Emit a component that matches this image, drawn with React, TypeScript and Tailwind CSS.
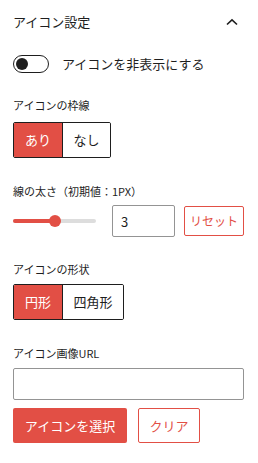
import { useState } from 'react';

const RED = 'bg-[#e24f45]';

const Segmented = ({ options, active, widths }: { options: string[]; active: number; widths: string[] }) => (
  <div className="flex h-[36px] border border-[#1e1e1e] rounded-[2px] overflow-hidden w-fit">
    {options.map((opt, i) => (
      <div
        key={opt}
        className={`${widths[i]} flex items-center justify-center text-[13px] ${i > 0 ? 'border-l border-[#1e1e1e]' : ''} ${
          i === active ? `${RED} text-white` : 'bg-white text-[#1e1e1e]'
        }`}
      >
        {opt}
      </div>
    ))}
  </div>
);

const Label = ({ children, className = '' }: { children: React.ReactNode; className?: string }) => (
  <div className={`text-[11px] leading-[16px] text-[#1e1e1e] uppercase ${className}`}>{children}</div>
);

export default function App() {
  const [width, setWidth] = useState('3');

  return (
    <div
      className="w-[258px] h-[463px] bg-white text-[#1e1e1e] overflow-hidden"
      style={{ fontFamily: '"Noto Sans CJK JP", "Noto Sans", sans-serif' }}
    >
      <div className="flex items-center justify-between h-[44px] pl-[13px] pr-[20px]">
        <span className="text-[13px]">アイコン設定</span>
        <svg width="12" height="8" viewBox="0 0 12 8" fill="none">
          <path d="M1 6.5 L6 1.8 L11 6.5" stroke="#1e1e1e" strokeWidth="1.6" />
        </svg>
      </div>

      <div className="px-[13px]">
        <div className="flex items-center mt-[11px] h-[18px]">
          <div className="w-[36px] h-[18px] rounded-full border border-[#1e1e1e] flex items-center px-[2px]">
            <div className="w-[12px] h-[12px] rounded-full bg-[#1e1e1e]" />
          </div>
          <span className="ml-[13px] text-[13px]">アイコンを非表示にする</span>
        </div>

        <Label className="mt-[24px]">アイコンの枠線</Label>
        <div className="mt-[9px]">
          <Segmented options={['あり', 'なし']} active={0} widths={['w-[48px]', 'w-[48px]']} />
        </div>

        <Label className="mt-[25px]">線の太さ（初期値：1px）</Label>
        <div className="flex items-center mt-[6px] h-[32px]">
          <div className="relative w-[83px] h-[4px] rounded-full bg-[#dddddd]">
            <div className={`absolute left-0 top-0 h-[4px] w-[42px] rounded-full ${RED}`} />
            <div className={`absolute left-[36px] top-[-4px] w-[12px] h-[12px] rounded-full ${RED}`} />
          </div>
          <input
            value={width}
            onChange={(e) => setWidth(e.target.value)}
            className="ml-[16px] w-[63px] h-[32px] border border-[#949494] rounded-[2px] px-[8px] text-[13px] outline-none"
          />
          <button className="ml-[9px] w-[60px] h-[30px] border border-[#e24f45] rounded-[2px] text-[12px] text-[#e24f45] bg-white">
            リセット
          </button>
        </div>

        <Label className="mt-[24px]">アイコンの形状</Label>
        <div className="mt-[7px]">
          <Segmented options={['円形', '四角形']} active={0} widths={['w-[48px]', 'w-[61px]']} />
        </div>

        <Label className="mt-[25px]">アイコン画像URL</Label>
        <input className="mt-[7px] block w-[231px] h-[32px] border border-[#949494] rounded-[2px] px-[8px] text-[13px] outline-none" />

        <div className="flex mt-[8px] gap-[11px]">
          <button className={`w-[114px] h-[35px] rounded-[2px] text-[13px] text-white ${RED}`}>アイコンを選択</button>
          <button className="w-[62px] h-[35px] rounded-[2px] border border-[#e24f45] text-[13px] text-[#e24f45] bg-white">
            クリア
          </button>
        </div>
      </div>
    </div>
  );
}
